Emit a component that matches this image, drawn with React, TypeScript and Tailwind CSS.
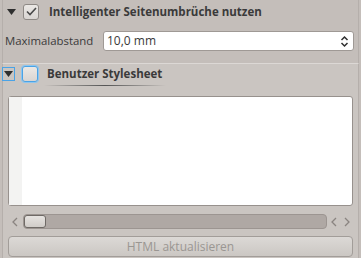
import React from 'react'

function Arrow() {
  return (
    <svg width="9" height="6" viewBox="0 0 9 6">
      <path d="M0 0 L9 0 L4.5 6 Z" fill="#2f2f2f" />
    </svg>
  )
}

function Checkbox({ checked, focus }: { checked?: boolean; focus?: boolean }) {
  return (
    <div
      className={`flex h-[16px] w-[16px] items-center justify-center rounded-[3px] border bg-gradient-to-b from-[#ebe8e5] to-[#d9d5d2] ${
        focus ? 'border-[#4aa3e6] shadow-[0_0_0_1px_#8cc5ef]' : 'border-[#8e8985]'
      }`}
    >
      {checked && (
        <svg width="11" height="9" viewBox="0 0 11 9">
          <path d="M1 4.5 L4 7.5 L10 1" fill="none" stroke="#4a4a4a" strokeWidth="1.6" />
        </svg>
      )}
    </div>
  )
}

export default function App() {
  return (
    <div
      className="flex h-[258px] w-[361px] flex-col overflow-hidden bg-[#c4beba] text-[12px] text-[#3a3a3a]"
      style={{ fontFamily: '"Open Sans", "DejaVu Sans", sans-serif' }}
    >
      <div className="mx-[2px] flex h-[63px] flex-col border-x border-[#b5afab]">
        <div className="flex h-[22px] items-center pt-[1px]">
          <div className="ml-[2px] flex w-[12px] justify-center">
            <Arrow />
          </div>
          <div className="ml-[6px]">
            <Checkbox checked />
          </div>
          <span className="ml-[10px] text-[11.5px] font-bold">Intelligenter Seitenumbrüche nutzen</span>
        </div>
        <div className="mt-[9px] flex h-[20px] items-center">
          <span className="ml-[2px] w-[98px] text-[11.4px]">Maximalabstand</span>
          <div className="mr-[4px] flex h-[20px] flex-1 items-center justify-between rounded-[3px] border border-[#9f9995] bg-white pl-[3px] pr-[4px]">
            <span>10,0 mm</span>
            <svg width="9" height="13" viewBox="0 0 9 13">
              <path d="M1.5 5 L4.5 2 L7.5 5 M1.5 8 L4.5 11 L7.5 8" fill="none" stroke="#2f2f2f" strokeWidth="1.5" />
            </svg>
          </div>
        </div>
      </div>
      <div className="mx-[2px] flex flex-1 flex-col border-x border-t border-x-[#b5afab] border-t-[#dcd8d5] bg-[#cac5c1]">
        <div className="flex h-[19px] items-center pt-[1px]">
          <div className="-ml-[1px] flex h-[14px] w-[13px] items-center justify-center border border-[#4aa3e6]">
            <Arrow />
          </div>
          <div className="ml-[7px]">
            <Checkbox focus />
          </div>
          <span className="ml-[9px] text-[11.5px] font-bold leading-[16px]">Benutzer Stylesheet</span>
        </div>
        <div className="ml-[41px] mt-[2px] h-[1px] w-[122px] bg-gradient-to-r from-[#cac5c1] via-[#555] to-[#cac5c1]" />
        <div className="mx-[5px] mt-[10px] flex h-[110px] rounded-[3px] border border-[#97918d] bg-white">
          <div className="w-[13px] bg-[#f3f3f2]" />
        </div>
        <div className="mx-[5px] mt-[7px] flex h-[17px] items-center">
          <svg width="14" height="10" viewBox="0 0 14 10" className="ml-[1px]">
            <path d="M8 1 L4 5 L8 9" fill="none" stroke="#8a8480" strokeWidth="1.3" />
          </svg>
          <div className="flex h-[15px] flex-1 items-center rounded-[4px] border border-[#9c9591] bg-[#afa8a4]">
            <div className="h-[13px] w-[22px] rounded-[3px] border border-[#6f6a66] bg-gradient-to-b from-[#e6e3e0] to-[#d0ccc8]" />
          </div>
          <svg width="26" height="10" viewBox="0 0 26 10">
            <path d="M9 1 L5 5 L9 9 M18 1 L22 5 L18 9" fill="none" stroke="#8a8480" strokeWidth="1.3" />
          </svg>
        </div>
        <div className="mx-[5px] mt-[6px] flex h-[21px] items-center justify-center rounded-[4px] border border-[#a29d99] bg-gradient-to-b from-[#dcd9d6] to-[#cbc7c3] text-[#9a9692]">
          HTML aktualisieren
        </div>
      </div>
    </div>
  )
}
